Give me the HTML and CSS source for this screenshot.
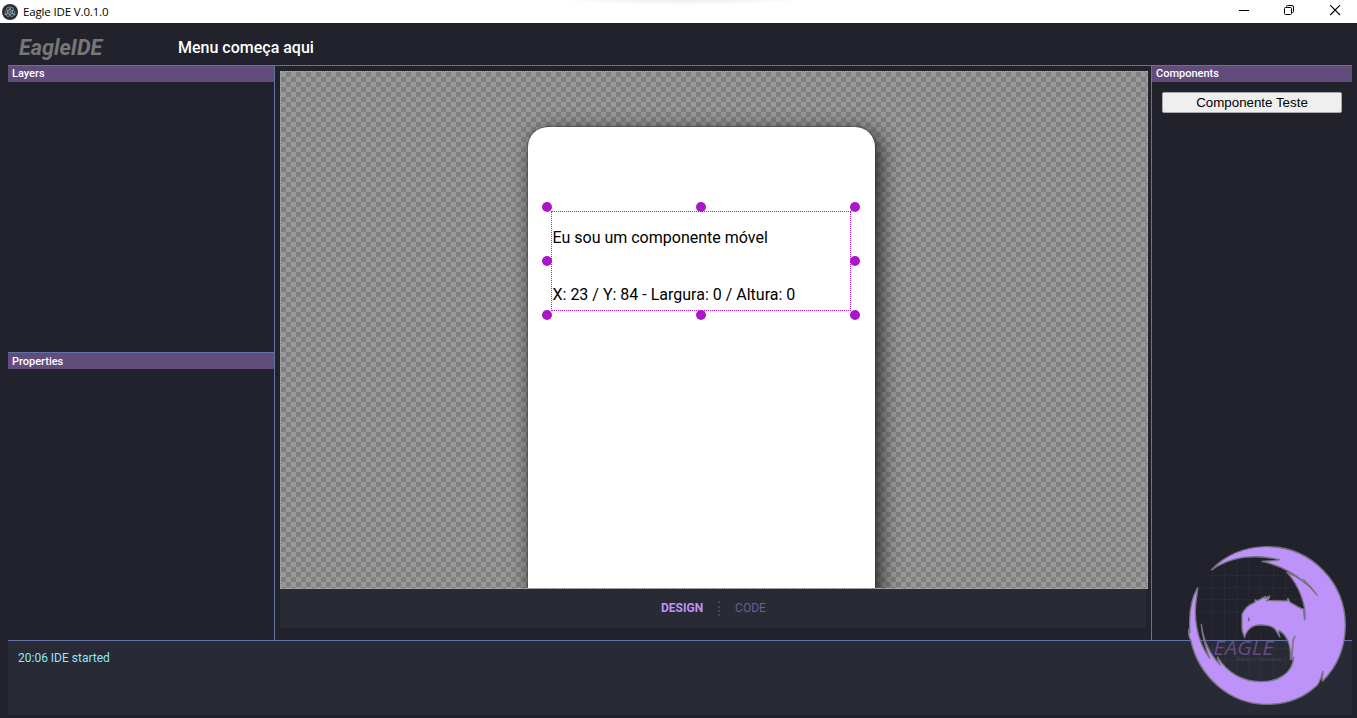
FILE: index.html
```html
<!DOCTYPE html>
<html lang="pt-BR">
<head>
<meta charset="utf-8">
<title>Eagle IDE V.0.1.0</title>
<link rel="stylesheet" href="styles.css">
</head>
<body>
<header class="titlebar">
  <svg class="app-icon" viewBox="0 0 16 16">
    <circle cx="8" cy="8" r="8" fill="#2b2e3a"/>
    <g fill="none" stroke="#8fa9b3" stroke-width=".7">
      <ellipse cx="8" cy="8" rx="5.2" ry="2"/>
      <ellipse cx="8" cy="8" rx="5.2" ry="2" transform="rotate(60 8 8)"/>
      <ellipse cx="8" cy="8" rx="5.2" ry="2" transform="rotate(120 8 8)"/>
    </g>
    <g fill="#9fb8c0"><circle cx="8" cy="8" r=".8"/><circle cx="3.4" cy="10.4" r=".8"/><circle cx="12.6" cy="10.4" r=".8"/><circle cx="8" cy="2.9" r=".7"/></g>
  </svg>
  <span class="window-title">Eagle IDE V.0.1.0</span>
  <svg class="window-controls" viewBox="0 0 118 23" fill="none" stroke="#000" stroke-width="1">
    <path d="M0 10.500H10"/>
    <rect x="45.500" y="7.500" width="7" height="7" rx="1"/>
    <path d="M47.500 7V6.500Q47.500 5.500 48.500 5.500H53Q54.500 5.500 54.500 7V11.500Q54.500 12.500 53.500 12.500H53"/>
    <path d="M91.200 5.200L101 15M101 5.200L91.200 15" stroke-width="1.1"/>
  </svg>
</header>
<div class="menubar">
  <span class="brand">EagleIDE</span>
  <span class="menu">Menu começa aqui</span>
</div>
<main class="workspace">
  <aside class="sidebar">
    <section class="panel panel-layers"><h2 class="panel-title">Layers</h2></section>
    <section class="panel panel-properties"><h2 class="panel-title">Properties</h2></section>
  </aside>
  <div class="editor">
    <div class="canvas">
      <div class="phone">
        <div class="component">
          <p class="line">Eu sou um componente móvel</p>
          <p class="line">X: 23 / Y: 84 - Largura: 0 / Altura: 0</p>
          <i class="handle top left"></i><i class="handle top center"></i><i class="handle top right"></i>
          <i class="handle middle left"></i><i class="handle middle right"></i>
          <i class="handle bottom left"></i><i class="handle bottom center"></i><i class="handle bottom right"></i>
        </div>
      </div>
    </div>
    <nav class="tabs">
      <span class="tab active">DESIGN</span>
      <span class="divider"></span>
      <span class="tab">CODE</span>
    </nav>
  </div>
  <aside class="components">
    <h2 class="panel-title">Components</h2>
    <button class="component-button">Componente Teste</button>
  </aside>
</main>
<footer class="console">20:06 IDE started</footer>
<svg class="logo" viewBox="0 0 540 549">
  <g stroke="#85878f" stroke-opacity=".2" stroke-width="2" stroke-dasharray="7 4" fill="none">
    <path d="M107 110V380M143 90V400M180 75V415M216 70V430M252 70V430M289 80V425M325 100V400"/>
    <path d="M90 121H340M75 158H375M65 194H380M65 230H380M65 267H350M75 340H345M95 376H340"/>
  </g>
  <path fill="#bd93f9" stroke="#777380" stroke-width="4" stroke-linejoin="round" d="M103 105C145 60 205 35 270 35C405 35 505 145 505 270C505 340 480 395 437 438C432 432 439 420 438 409C432 425 431 436 422 449C382 488 330 508 270 508C158 508 65 425 41 315C35 305 34 292 36 281L39 292C35 240 43 190 62 158C63 170 55 195 55 232C56 285 70 332 98 370C86 338 75 305 73 268C80 320 98 358 130 390C125 382 121 374 122 366C150 414 199 440 253 440C302 440 347 416 350 366L345 375C342 368 350 340 347 323Q347 312 354 304C344 318 349 347 340 373C342 337 335 304 306 286Q304 297 309 306C301 299 300 288 293 281C280 269 264 270 250 270C225 269 207 286 203 308C199 295 194 290 195 273V238C204 220 211 211 234 202V195L242 197L266 184L264 190L278 183Q277 192 269 197C290 197 316 197 330 198L333 190L339 202C353 207 364 220 379 222L383 255C390 214 366 151 330 112C350 119 369 131 385 145C347 108 303 90 255 79C273 77 291 78 308 74C229 57 165 63 103 105Z"/>
  <path d="M330 112C369 126 396 150 422 182C408 162 394 147 378 132" fill="none" stroke="#777380" stroke-width="3.500"/>
  <path d="M213 245L219 254L213 260" fill="#776091" stroke="#777" stroke-width="2"/>
  <text class="logo-name" x="109" y="359" textLength="181" lengthAdjust="spacingAndGlyphs">EAGLE</text>
  <text class="logo-sub" x="176" y="379" textLength="138" lengthAdjust="spacingAndGlyphs">React Native</text>
</svg>
</body>
</html>
```
FILE: styles.css
```css
* { box-sizing: border-box; }
body {
  margin: 0;
  height: 718px;
  overflow: hidden;
  display: flex;
  flex-direction: column;
  background: #22222c;
  font-family: Roboto, sans-serif;
  color: #fff;
}
.titlebar {
  flex: none;
  height: 23px;
  display: flex;
  align-items: center;
  padding: 0 17px 0 2px;
  background: radial-gradient(125px 5px at 682px 0, #f0f0f0 20%, #fff);
  color: #000;
}
.app-icon { width: 16px; height: 16px; margin-right: 5px; }
.window-title { font: 11.5px "Open Sans", sans-serif; letter-spacing: -.15px; }
.window-controls { width: 118px; height: 23px; margin-left: auto; margin-right: -17px; }
.menubar {
  flex: none;
  height: 42px;
  display: flex;
  align-items: center;
  padding: 7px 8px 0 19px;
}
.brand { width: 159px; font-size: 21.6px; line-height: 24px; font-weight: 700; font-style: italic; color: #777; }
.menu { font-size: 16px; font-weight: 500; }
.workspace {
  flex: none;
  height: 575px;
  margin: 0 5px 0 8px;
  display: grid;
  grid-template-columns: 267px 1fr 201px;
  border-top: 1px solid #6272a4;
}
.sidebar {
  display: grid;
  grid-template-rows: 286px 1fr;
  border-right: 1px solid #6272a4;
}
.panel-properties { border-top: 1px solid #6272a4; }
.panel-title {
  margin: 0;
  height: 16px;
  padding-left: 4px;
  background: #624c7c;
  font-size: 11px;
  line-height: 15px;
  font-weight: 500;
}
.panel-properties .panel-title { line-height: 17px; }
.editor { padding: 5px 3px 12px 5px; display: flex; flex-direction: column; }
.canvas {
  height: 518px;
  overflow: hidden;
  padding: 55px 0 0 247px;
  border: 1px dotted #b0b0b0;
  background: repeating-conic-gradient(#808080 0 25%, #999 0 50%) 0 0 / 10px 10px;
}
.phone {
  width: 347px;
  height: 600px;
  padding: 84px 0 0 23px;
  border-radius: 20px;
  background: #fff;
  box-shadow: 0 0 2px #222, 5px 5px 20px #222;
  color: #000;
}
.component {
  position: relative;
  width: 300px;
  height: 100px;
  padding: 16px 0 0 .5px;
  border: 1px dotted #a917c9;
}
.line { margin: 0 0 38px; font-size: 16px; line-height: 19px; }
.handle {
  position: absolute;
  width: 10px;
  height: 10px;
  border-radius: 50%;
  background: #a917c9;
}
.top { top: -10px; }
.middle { top: 44px; }
.bottom { bottom: -10px; }
.left { left: -10px; }
.center { left: 144px; }
.right { right: -10px; }
.tabs {
  height: 39px;
  margin-right: 2px;
  padding: 0 0 2px 381px;
  display: flex;
  align-items: center;
  background: #282a36;
  font-size: 12px;
}
.tab { color: #725a98; }
.tab.active { color: #bd93f9; font-weight: 700; }
.divider { height: 15px; margin: 1px 15px 0; border-left: 2px dotted #464653; }
.components { border-left: 1px solid #6272a4; }
.component-button {
  display: block;
  width: 180px;
  height: 21px;
  margin: 10px 0 0 10px;
  padding: 0;
  border: 1px solid #aaa;
  border-radius: 2px;
  background: #efefef;
  color: #000;
  font: 13.333px "Liberation Sans", sans-serif;
}
.console {
  flex: none;
  height: 75px;
  margin: 0 5px 0 8px;
  padding: 9px 10px;
  border-top: 1px solid #6272a4;
  background: #282a36;
  color: #8be9fd;
  font-size: 12px;
  line-height: 16px;
}
.logo {
  position: absolute;
  left: 1177px;
  top: 535px;
  width: 180px;
  height: 183px;
}
.logo-name { font: italic 62px "Open Sans", sans-serif; fill: #654a80; }
.logo-sub { font: 18px "Open Sans", sans-serif; fill: #45434a; }
```
